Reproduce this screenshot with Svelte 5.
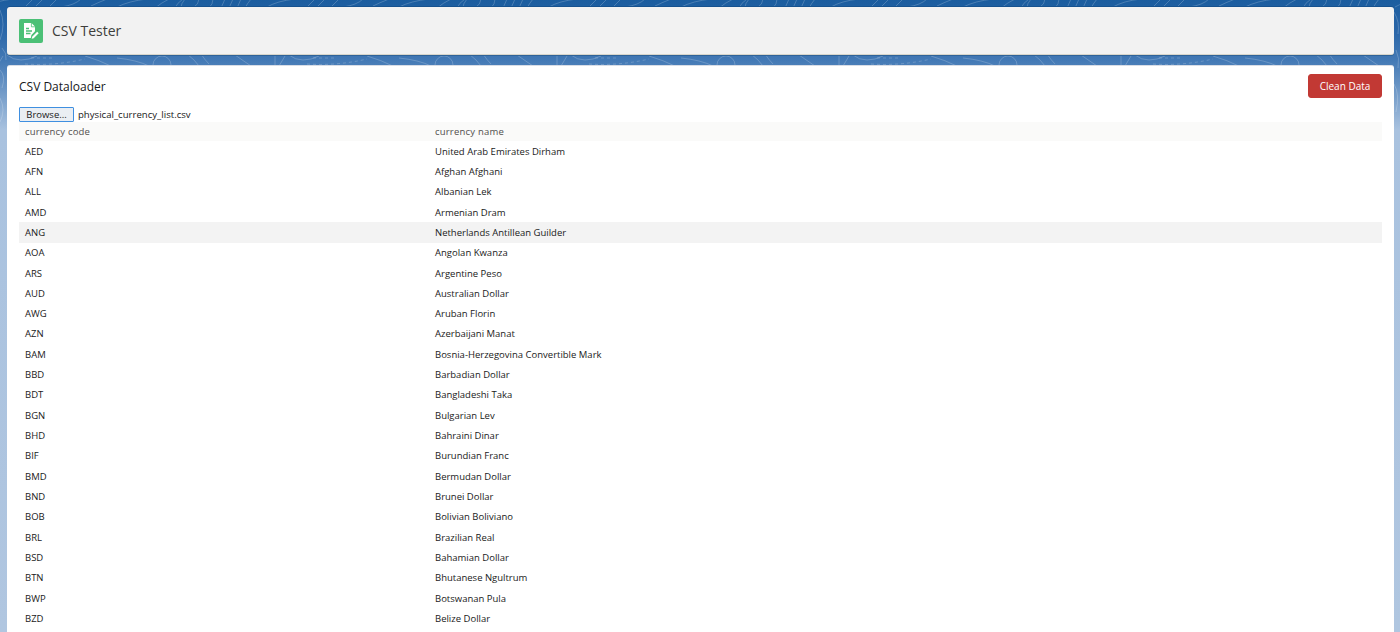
<script>
	const rows = [
		['AED', 'United Arab Emirates Dirham'],
		['AFN', 'Afghan Afghani'],
		['ALL', 'Albanian Lek'],
		['AMD', 'Armenian Dram'],
		['ANG', 'Netherlands Antillean Guilder'],
		['AOA', 'Angolan Kwanza'],
		['ARS', 'Argentine Peso'],
		['AUD', 'Australian Dollar'],
		['AWG', 'Aruban Florin'],
		['AZN', 'Azerbaijani Manat'],
		['BAM', 'Bosnia-Herzegovina Convertible Mark'],
		['BBD', 'Barbadian Dollar'],
		['BDT', 'Bangladeshi Taka'],
		['BGN', 'Bulgarian Lev'],
		['BHD', 'Bahraini Dinar'],
		['BIF', 'Burundian Franc'],
		['BMD', 'Bermudan Dollar'],
		['BND', 'Brunei Dollar'],
		['BOB', 'Bolivian Boliviano'],
		['BRL', 'Brazilian Real'],
		['BSD', 'Bahamian Dollar'],
		['BTN', 'Bhutanese Ngultrum'],
		['BWP', 'Botswanan Pula'],
		['BZD', 'Belize Dollar']
	];

	// contour lines of the page background, one tile repeated across the top
	const tiles = [-165, 117, 399, 681, 963, 1245];
</script>

<div class="page">
	<svg class="contours" width="1400" height="140" viewBox="0 0 1400 140" aria-hidden="true">
		{#each tiles as x}
			<g transform="translate({x} 0)" fill="none" stroke="#fff" stroke-opacity=".2" stroke-width="1">
				<path d="M0 58q20 2 32 8" />
				<circle cx="45" cy="65" r="9" />
				<path d="M70 54q8 6 12 12M84 54q4 6 8 10" />
				<path d="M118 55l16 11M158 55v11M168 56l-6 10M172 55q6 5 14 5t16-4" />
				<path d="M190 64q30 2 60-5M196 58h24" stroke-dasharray="3 3" />
				<path d="M250 56q14 4 28 11" />
				<path d="M0 7q12-6 30-8M38 8q6-5 14-9M58 8q2-5 8-9M64 7q0-3 4-8" />
				<path d="M76 8q6-4 6-9M92 8q4-4 4-9M104 8l4-9M112 8l4-9M120 8l4-9M128 8q2-4 6-9" />
				<path d="M150 7q10-6 28-8M190 7l8-8M200 7l8-8M214 7l8-8M226 7q14-2 20-8M256 6q6-3 16-7" />
			</g>
		{/each}
		<g fill="none" stroke="#fff" stroke-opacity=".2" stroke-width="1">
			<path d="M0 10q6 14 0 30M2 48q5 5 4 12M0 70q6 6 2 18M0 98q6 12 0 24" />
			<path d="M1394 12q6 10 4 22M1396 50q4 8 2 18M1394 84q6 10 2 28" />
		</g>
	</svg>

	<header class="card head">
		<span class="logo">
			<svg width="16" height="18" viewBox="0 0 16 18">
				<path d="M1 1h7.500l3.500 3.500v4.800l-3.600 3.700-.6 3H1z" fill="#fff" />
				<path d="M3 6.500h3M3 9h6M3 11.500h4.500" stroke="#4bc076" stroke-width="1.300" fill="none" />
				<path d="M8.400 1v3.800h3.600" stroke="#4bc076" stroke-width=".8" fill="none" />
				<path d="M9.200 14.800l5-5 1.500 1.500-5 5-2 .5z" fill="#fff" />
			</svg>
		</span>
		<h1>CSV Tester</h1>
	</header>

	<main class="card body">
		<div class="title-row">
			<h2>CSV Dataloader</h2>
			<button class="danger">Clean Data</button>
		</div>
		<div class="file-row">
			<button class="browse">Browse...</button>
			<span>physical_currency_list.csv</span>
		</div>
		<table>
			<thead>
				<tr>
					<th>currency code</th>
					<th>currency name</th>
				</tr>
			</thead>
			<tbody>
				{#each rows as row}
					<tr class:hovered={row[0] === 'ANG'}>
						<td>{row[0]}</td>
						<td>{row[1]}</td>
					</tr>
				{/each}
			</tbody>
		</table>
	</main>
</div>

<style>
	:global(body) {
		margin: 0;
		overflow: hidden;
	}
	.page {
		position: relative;
		box-sizing: border-box;
		height: 632px;
		padding: 7px 6px 0 7px;
		overflow: hidden;
		background: linear-gradient(#1b5d9f 0, #2a66a8 30px, #4379b5 60px, #a9c2df 130px, #b0c6e0 632px);
		font-family: "Open Sans", "Noto Sans", sans-serif;
		color: #1a1a1a;
	}
	.contours {
		position: absolute;
		top: 0;
		left: 0;
	}
	.card {
		position: relative;
		border-radius: 3px;
		box-sizing: border-box;
	}
	.head {
		display: flex;
		align-items: center;
		gap: 9px;
		height: 48px;
		padding: 0 12px;
		background: #f2f2f2;
		border-bottom: 1px solid #d8d6cc;
		box-shadow: 0 -1px 0 #16528f, 0 1px 0 #2f6399;
	}
	.logo {
		display: flex;
		align-items: center;
		justify-content: center;
		width: 24px;
		height: 24px;
		border-radius: 2px;
		background: #4bc076;
	}
	h1 {
		margin: 0;
		font-size: 14px;
		font-weight: 400;
		color: #3e3e3c;
	}
	.body {
		margin-top: 10px;
		height: 600px;
		padding: 8px 12px 0;
		background: #fff;
		border-top: 1px solid #d8dde6;
	}
	.title-row {
		display: flex;
		align-items: center;
		justify-content: space-between;
		height: 24px;
	}
	h2 {
		margin: 0;
		font-size: 12px;
		font-weight: 400;
		color: #16181a;
	}
	.danger {
		width: 74px;
		height: 24px;
		padding: 0;
		border: 1px solid #c23934;
		border-radius: 3px;
		background: #c23934;
		color: #fff;
		font: 10px "Open Sans", sans-serif;
	}
	.file-row {
		display: flex;
		align-items: center;
		gap: 4px;
		height: 15px;
		margin-top: 9px;
		font-size: 9.600px;
	}
	.browse {
		box-sizing: border-box;
		width: 55px;
		height: 15px;
		padding: 0;
		border: 1px solid #3f8fe0;
		border-radius: 1px;
		background: #eaeef3;
		color: #1a1a1a;
		font: 9.500px "Open Sans", sans-serif;
	}
	table {
		width: 100%;
		border-collapse: collapse;
		table-layout: fixed;
		font-size: 9.500px;
	}
	th {
		height: 19px;
		padding: 0 6px;
		background: #fafaf9;
		color: #514f4d;
		font-weight: 400;
		text-align: left;
		letter-spacing: .2px;
	}
	th:first-child {
		width: 398px;
	}
	td {
		height: 20.320px;
		padding: 0 6px;
		color: #1a1a1a;
	}
	.hovered td {
		background: #f3f3f3;
	}
</style>
